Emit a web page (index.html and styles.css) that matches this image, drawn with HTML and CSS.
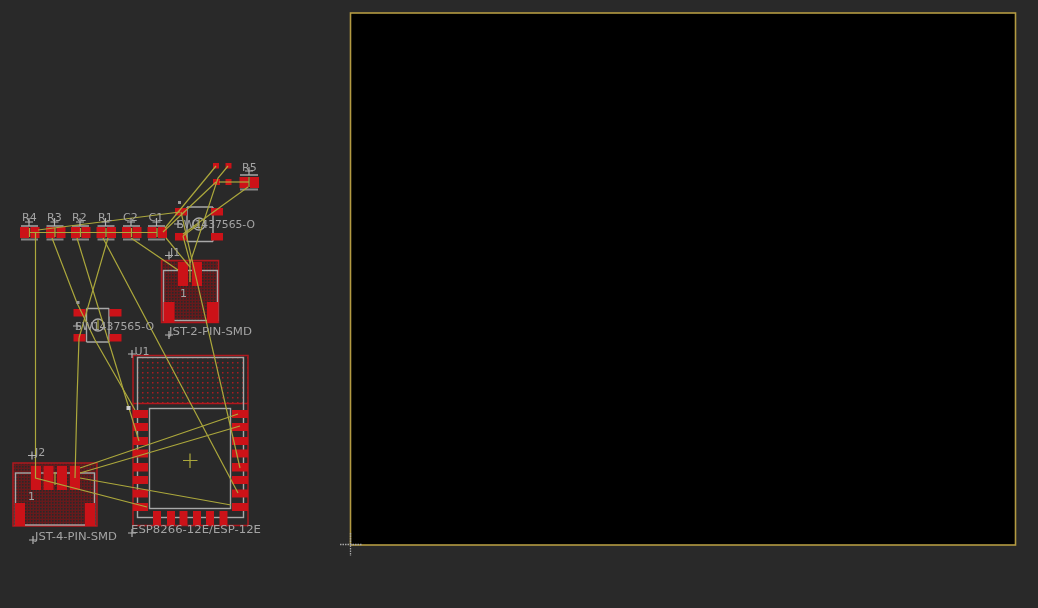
FILE: index.html
```html
<!DOCTYPE html>
<html lang="en">
<head>
<meta charset="utf-8">
<title>PCB layout</title>
<link rel="stylesheet" href="styles.css">
</head>
<body>
<svg class="editor" viewBox="0 0 1038 608" width="1038" height="608" xmlns="http://www.w3.org/2000/svg">
  <defs>
    <pattern id="hatch-fine" width="3" height="3" patternUnits="userSpaceOnUse">
      <rect class="hatch-dot" x="0" y="0" width="3" height="3"/>
      <rect class="hatch-gap" x="1" y="1" width="1.600" height="1.600"/>
    </pattern>
    <pattern id="hatch-wide" width="5" height="5" patternUnits="userSpaceOnUse">
      <rect class="hatch-spot" x="2" y="2" width="1.500" height="1.500"/>
    </pattern>
  </defs>

  <rect class="board" x="350.5" y="13" width="665" height="532"/>
  <g class="crosshair">
    <line x1="340" y1="544.5" x2="362" y2="544.5"/>
    <line x1="350.5" y1="533" x2="350.5" y2="556"/>
  </g>

  <!-- footprints: hatched keep-outs and outlines -->
  <g class="keepout">
    <rect class="fine" x="13" y="463" width="84" height="63"/>
    <rect class="fine" x="161.500" y="260.500" width="57" height="62"/>
    <rect class="wide" x="133" y="355.500" width="115" height="48"/>
    <path class="plain" d="M133 403.500V525.500H248V403.500"/>
  </g>
  <g class="silk">
    <rect x="15.500" y="473" width="79" height="52"/>
    <rect x="163.500" y="270.500" width="54" height="50"/>
    <rect x="137.500" y="357.500" width="106" height="160"/>
    <rect x="149.500" y="408.500" width="81" height="100"/>
    <path d="M187 207H213M187 241.500H213M187 207V241.500M213 207V241.500"/>
    <path d="M86.500 308.500H109M86.500 342H109M86.500 308.500V342M109 308.500V342"/>
    <circle cx="199" cy="224" r="6"/>
    <circle cx="98" cy="325" r="6"/>
    <path class="band" d="M21 226H38M21 239.500H38M46.500 226H63.500M46.500 239.500H63.500M72 226H89M72 239.500H89M97.500 226H114.500M97.500 239.500H114.500M123 226H140M123 239.500H140M148 226H165M148 239.500H165M240 175H258M240 189.500H258"/>
  </g>

  <!-- copper pads -->
  <g class="pad">
    <rect x="20" y="227" width="9" height="11"/><rect x="30.500" y="227" width="9" height="11"/>
    <rect x="46" y="227" width="9" height="11"/><rect x="56.500" y="227" width="9" height="11"/>
    <rect x="71" y="227" width="9" height="11"/><rect x="81.500" y="227" width="9" height="11"/>
    <rect x="96.500" y="227" width="9" height="11"/><rect x="107" y="227" width="9" height="11"/>
    <rect x="122" y="227" width="9" height="11"/><rect x="132.500" y="227" width="9" height="11"/>
    <rect x="147.500" y="227" width="9" height="11"/><rect x="158" y="227" width="9" height="11"/>
    <rect x="239.500" y="177" width="9" height="11"/><rect x="250" y="177" width="9" height="11"/>
    <rect x="213" y="163" width="6" height="5.500"/><rect x="225.500" y="163" width="6" height="5.500"/>
    <rect x="213" y="179" width="7" height="6"/><rect x="225.500" y="179" width="6" height="6"/>
    <rect x="175" y="208" width="12" height="7.500"/><rect x="211" y="208" width="12" height="7.500"/>
    <rect x="175" y="233" width="12" height="7.500"/><rect x="211" y="233" width="12" height="7.500"/>
    <rect x="73.500" y="309" width="12" height="7.500"/><rect x="109.500" y="309" width="12" height="7.500"/>
    <rect x="73.500" y="334" width="12" height="7.500"/><rect x="109.500" y="334" width="12" height="7.500"/>
    <rect x="178" y="262" width="10" height="24"/><rect x="192" y="262" width="10" height="24"/>
    <rect x="163.500" y="302" width="11" height="21"/><rect x="207" y="302" width="11" height="21"/>
    <rect x="31" y="466" width="10" height="24"/><rect x="43.500" y="466" width="10" height="24"/>
    <rect x="57" y="466" width="10" height="24"/><rect x="70" y="466" width="10" height="24"/>
    <rect x="15" y="503" width="10" height="23"/><rect x="85" y="503" width="10" height="23"/>
    <rect x="133" y="410" width="15" height="8"/><rect x="133" y="423" width="15" height="8"/>
    <rect x="133" y="437" width="15" height="8"/><rect x="133" y="449.500" width="15" height="8"/>
    <rect x="133" y="463" width="15" height="8.500"/><rect x="133" y="476" width="15" height="8"/>
    <rect x="133" y="489.500" width="15" height="8"/><rect x="133" y="503" width="15" height="8"/>
    <rect x="232" y="410" width="16" height="8"/><rect x="232" y="423" width="16" height="8"/>
    <rect x="232" y="437" width="16" height="8"/><rect x="232" y="449.500" width="16" height="8"/>
    <rect x="232" y="463" width="16" height="8.500"/><rect x="232" y="476" width="16" height="8"/>
    <rect x="232" y="489.500" width="16" height="8"/><rect x="232" y="503" width="16" height="8"/>
    <rect x="153" y="511" width="8" height="14"/><rect x="167" y="511" width="8" height="14"/>
    <rect x="179.500" y="511" width="8" height="14"/><rect x="193" y="511" width="8" height="14"/>
    <rect x="206" y="511" width="8" height="14"/><rect x="219.500" y="511" width="8" height="14"/>
  </g>

  <!-- ratsnest -->
  <g class="ratsnest">
    <line x1="30" y1="232.500" x2="157" y2="232.500"/>
    <line x1="219" y1="182" x2="249" y2="182"/>
    <line x1="38" y1="230" x2="180" y2="212"/>
    <polyline points="35.500,232 35.500,478 147,507"/>
    <polyline points="52,238 77,303 95,340 135,410"/>
    <line x1="77" y1="238" x2="139" y2="441"/>
    <line x1="108" y1="238" x2="79" y2="338"/>
    <polyline points="79,338 77,400 75,478"/>
    <line x1="103" y1="238" x2="238" y2="493"/>
    <line x1="131" y1="238" x2="178" y2="270"/>
    <line x1="166" y1="238" x2="190" y2="267"/>
    <line x1="216" y1="166" x2="165" y2="228"/>
    <polyline points="228,166 218,178 190,263"/>
    <line x1="216" y1="182" x2="163" y2="232"/>
    <line x1="181" y1="212" x2="240" y2="468"/>
    <line x1="248" y1="187" x2="183" y2="234"/>
    <line x1="199" y1="224" x2="183" y2="236"/>
    <line x1="183" y1="236" x2="190" y2="262"/>
    <line x1="190" y1="262" x2="190" y2="282"/>
    <line x1="55" y1="472" x2="55" y2="485"/>
    <line x1="80" y1="468" x2="238" y2="414"/>
    <line x1="80" y1="473" x2="240" y2="426"/>
    <line x1="80" y1="478" x2="231" y2="505"/>
    <path d="M183 460.500H197.500M190 453.500V468"/>
    <path d="M29.500 228V237M55 228V237M80.500 228V237M106 228V237M131.500 228V237M157 228V237M249 177V187M199 219V229M98 320V330"/>
  </g>

  <!-- reference markers -->
  <g class="marker">
    <path d="M25 222H33M29 218V226M50.500 222H58.500M54.500 218V226M76 222H84M80 218V226M101.500 222H109.500M105.500 218V226M127 222H135M131 218V226M152.500 222H160.500M156.500 218V226M245 171H253M249 167V175"/>
    <path d="M165 255.500H173M169 251.500V259.500M165 335H173M169 331V339M28 455.500H36M32 451.500V459.500M29 540H37M33 536V544M128 354H136M132 350V358M128 533H136M132 529V537M174 224H182M178 220V228M73 326H81M77 322V330"/>
  </g>
  <rect class="dot" x="126.500" y="406" width="4" height="4"/>
  <rect class="dot small" x="178" y="201" width="3" height="3"/>
  <rect class="dot small" x="76.500" y="301" width="3" height="3"/>

  <!-- labels -->
  <g class="label">
    <text x="22" y="221">R4</text>
    <text x="47" y="221">R3</text>
    <text x="72" y="221">R2</text>
    <text x="98" y="221">R1</text>
    <text x="123" y="221">C2</text>
    <text x="148.500" y="221">C1</text>
    <text x="242" y="170.500">R5</text>
    <text x="177" y="228" textLength="78" lengthAdjust="spacingAndGlyphs">SW1437565-O</text>
    <text x="75" y="330" textLength="79" lengthAdjust="spacingAndGlyphs">SW1437565-O</text>
    <text x="170" y="256">J1</text>
    <text x="35" y="455.500">J2</text>
    <text x="134.500" y="354.500">U1</text>
    <text x="180" y="297">1</text>
    <text x="28" y="500">1</text>
    <text x="169" y="335" textLength="83" lengthAdjust="spacingAndGlyphs">JST-2-PIN-SMD</text>
    <text x="35" y="539.500" textLength="82" lengthAdjust="spacingAndGlyphs">JST-4-PIN-SMD</text>
    <text x="131" y="532.500" textLength="130" lengthAdjust="spacingAndGlyphs">ESP8266-12E/ESP-12E</text>
  </g>
</svg>
</body>
</html>
```
FILE: styles.css
```css
html, body {
  margin: 0;
  padding: 0;
  background: #292929;
}

.editor {
  display: block;
  filter: blur(0.55px);
}

.board {
  fill: #000;
  stroke: #b39a42;
  stroke-width: 1.6;
}

.crosshair line {
  stroke: #a8a8a8;
  stroke-width: 1.3;
  stroke-dasharray: 1.5 1;
}

.hatch-dot {
  fill: #661a1c;
}

.hatch-gap {
  fill: #292929;
}

.hatch-spot {
  fill: #a81c22;
}

.keepout rect,
.keepout path {
  stroke: #b0181e;
  stroke-width: 1.5;
  fill: none;
}

.keepout .fine {
  fill: url(#hatch-fine);
}

.keepout .wide {
  fill: url(#hatch-wide);
}

.silk rect,
.silk path,
.silk circle {
  fill: none;
  stroke: #a8a8a8;
  stroke-width: 1.4;
}

.silk .band {
  stroke-width: 2;
  stroke: #868686;
}

.pad rect {
  fill: #cc1218;
}

.ratsnest line,
.ratsnest polyline,
.ratsnest path {
  fill: none;
  stroke: #aca83c;
  stroke-width: 1.2;
}

.marker path {
  fill: none;
  stroke: #b4b4b4;
  stroke-width: 1.2;
}

.dot {
  fill: #d0d0d0;
}

.dot.small {
  fill: #9a9a9a;
}

.label text {
  font-family: "DejaVu Sans", sans-serif;
  font-size: 11px;
  fill: #a4a4a4;
}
```
